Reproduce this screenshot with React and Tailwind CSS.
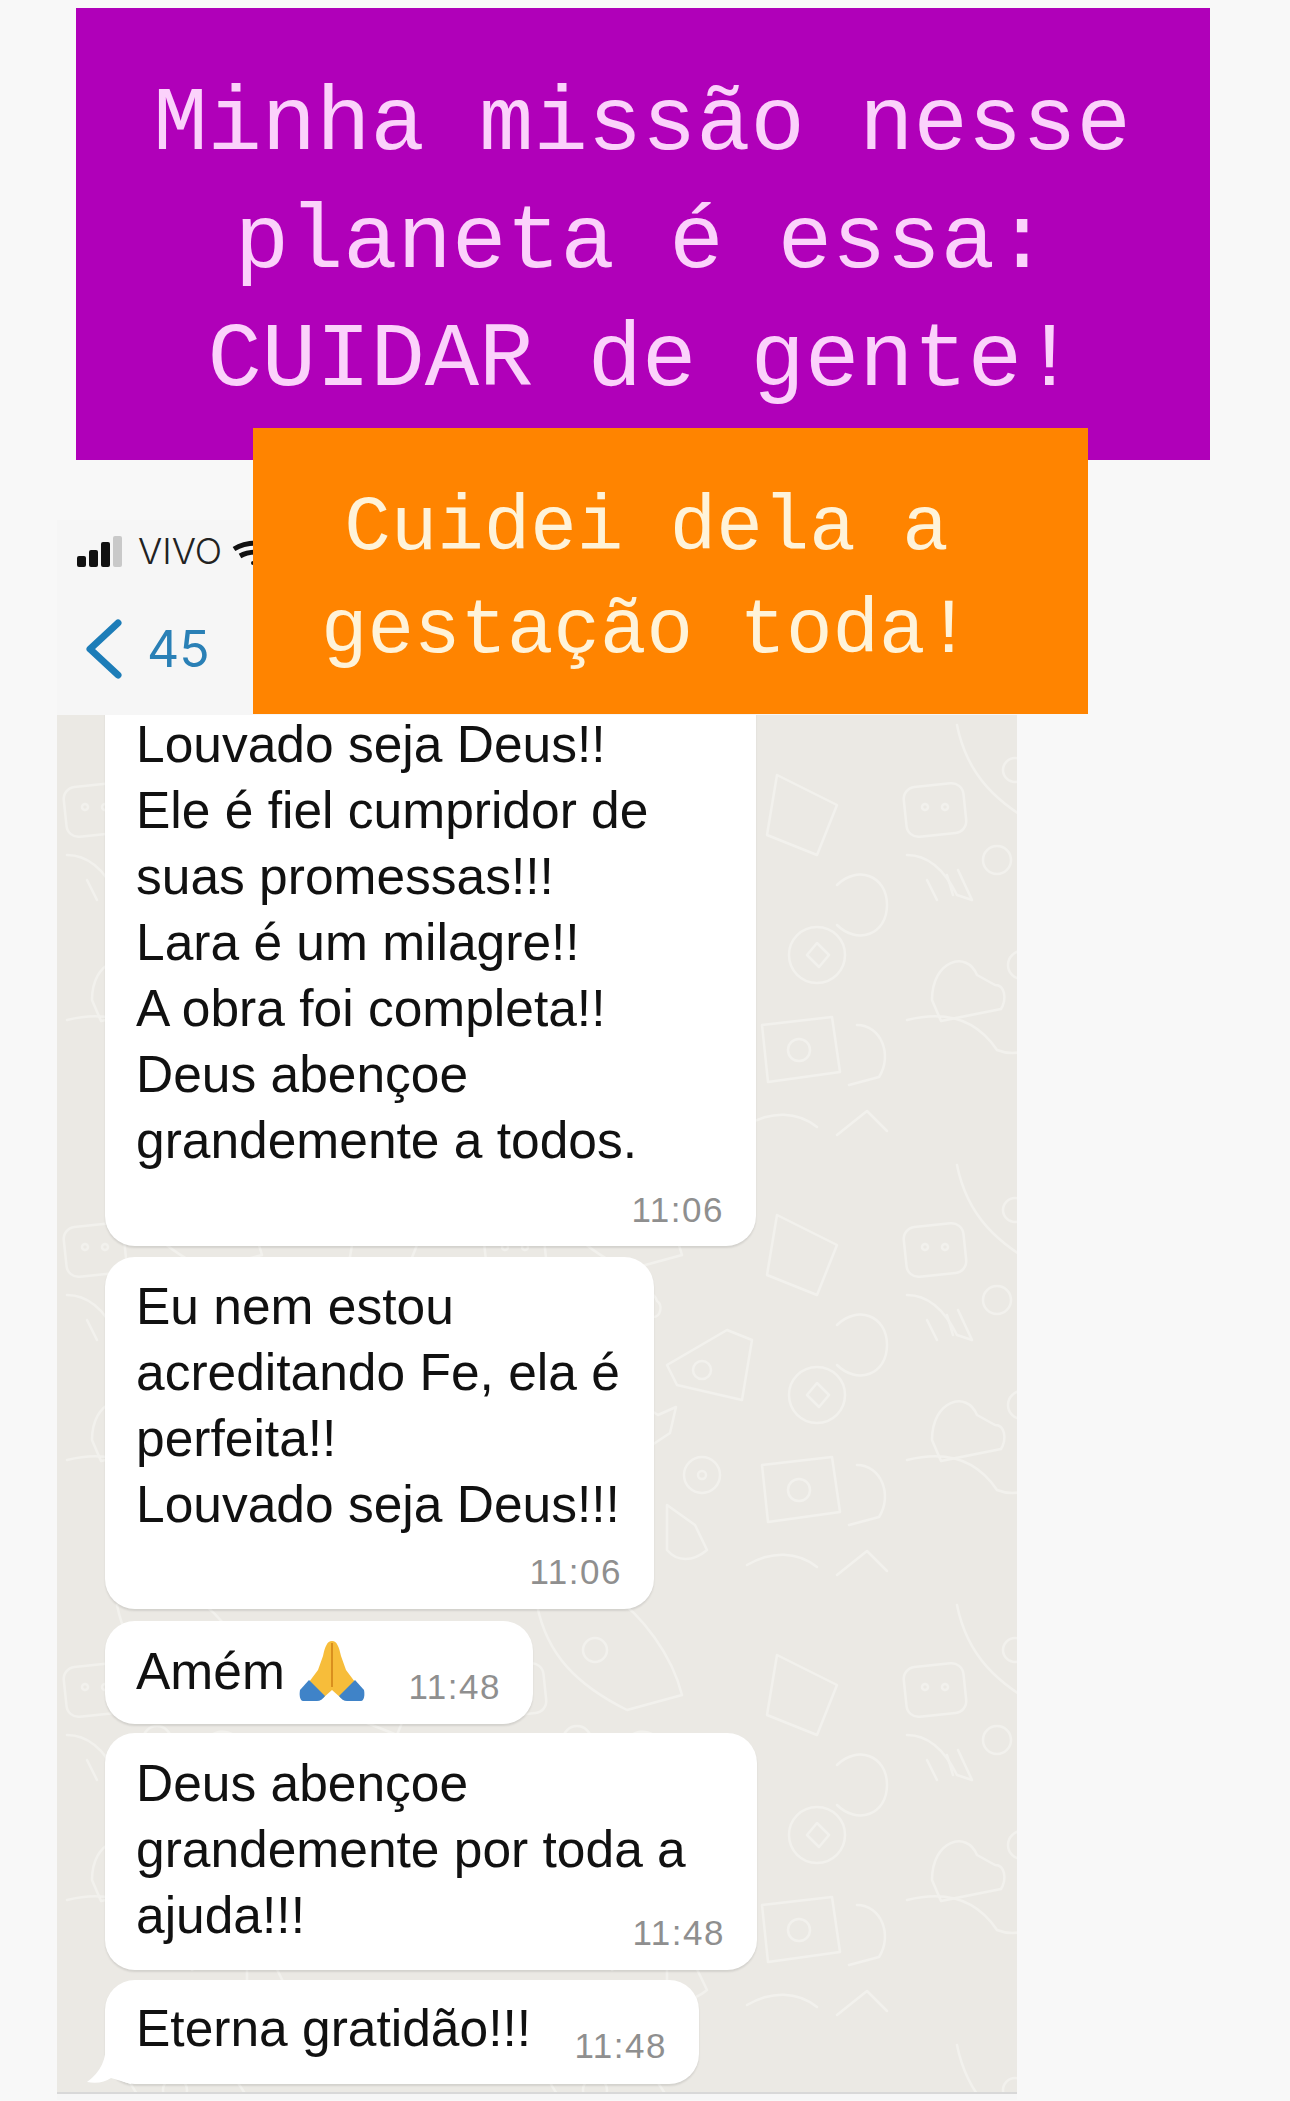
import React from 'react';

const sans = 'font-["Liberation_Sans",Arial,sans-serif]';

const Time = ({ children, className = '' }) => (
  <span className={`text-[35px] leading-[40px] tracking-[1.5px] text-[#8f8f8f] ${className}`}>{children}</span>
);

const Line = ({ children }) => <div className="whitespace-nowrap">{children}</div>;

const Bubble = ({ className, children }) => (
  <div className={`relative bg-white rounded-[30px] shadow-[0_2px_2px_rgba(0,0,0,0.1)] pl-[31px] pr-[32px] text-[51.5px] leading-[66px] text-[#111] ${className}`}>
    {children}
  </div>
);

const PrayEmoji = () => (
  <svg width="66" height="62" viewBox="0 0 66 62" className="ml-[14px] mb-[2px]">
    <path d="M33 1c-5 0-7 6-9 15l-5 14-9 12 14 16 9-8 9 8 14-16-9-12-5-14C40 7 38 1 33 1z" fill="#f7bd3a" />
    <path d="M33 3v44" stroke="#d98f1e" strokeWidth="2" />
    <path d="M10 40L1 50c-1 5 0 11 3 11h14c3 0 6-2 8-5z" fill="#3f83c8" />
    <path d="M56 40l9 10c1 5 0 11-3 11H48c-3 0-6-2-8-5z" fill="#3f83c8" />
  </svg>
);

const Doodles = () => (
  <svg className="absolute inset-0 w-full h-full blur-[0.7px]" fill="none" stroke="#f2f1ed" strokeWidth="2.5" strokeLinecap="round" strokeLinejoin="round">
    <defs>
      <pattern id="wall" x="0" y="0" width="420" height="440" patternUnits="userSpaceOnUse">
        <path d="M60 10c10 50 40 80 90 105l55-15c-10-40-40-80-70-100" />
        <circle cx="118" cy="55" r="12" />
        <rect x="8" y="70" width="60" height="50" rx="12" transform="rotate(-6 38 95)" />
        <circle cx="28" cy="92" r="3" />
        <circle cx="48" cy="92" r="3" />
        <circle cx="100" cy="145" r="14" />
        <path d="M150 150c0-16 26-18 30-4 6 4 4 16-4 16h-24c-6-2-6-10-2-12z" />
        <path d="M10 140c24 0 40 20 50 40l15 5-14-30" />
        <path d="M30 165l10 20M50 160l6 20" />
        <path d="M150 190l16-22 6 12-20 30" />
        <path d="M190 210l60-35 25 10-10 60-65-15z" />
        <circle cx="225" cy="215" r="9" />
        <circle cx="125" cy="250" r="14" />
        <path d="M165 250l16 10 18-8-6 26-18 12z" />
        <path d="M35 285c0-40 35-50 45-25l18 10c10 0 12 14 6 24l-60 12z" />
        <path d="M10 305c40-10 70 0 90 30 20 8 40 0 60-20l15 30-40 30" />
        <circle cx="225" cy="320" r="18" />
        <circle cx="225" cy="320" r="4" />
        <path d="M190 395l0-45 28 20 12 25c-14 12-30 12-40 0z" />
        <path d="M300 60l60 30-20 50-50-20z" />
        <path d="M360 170c20-20 50-10 50 20s-30 40-50 20" />
        <circle cx="340" cy="240" r="28" />
        <path d="M330 240l10-12 12 12-10 12z" />
        <path d="M285 310l70-8 8 55-72 10z" />
        <circle cx="322" cy="335" r="11" />
        <path d="M380 310c24 0 36 30 22 52l-30 8" />
        <path d="M270 410c24-14 50-14 70 2M360 420l30-24 20 20" />
      </pattern>
    </defs>
    <rect width="100%" height="100%" fill="url(#wall)" stroke="none" />
  </svg>
);

const App = () => {
  return (
    <div className="relative w-[1290px] h-[2101px] overflow-hidden bg-[#f8f8f8] pt-[8px]">
      <div className='ml-[76px] w-[1134px] h-[452px] bg-[#b000b9] pt-[58px] text-center font-["Liberation_Mono","Courier_New",monospace] text-[90.5px] leading-[118px] text-[#fbd2fb]'>
        <div className="pr-[2px]">Minha missão nesse</div>
        <div className="pr-[2px]">planeta é essa:</div>
        <div className="pr-[2px]">CUIDAR de gente!</div>
      </div>

      {/* print do whatsapp */}
      <div className={`ml-[57px] mt-[60px] w-[960px] ${sans}`}>
        <div className="h-[195px] bg-[#f6f6f6] px-[20px] pt-[16px]">
          <div className="flex items-end h-[31px]">
            <div className="flex items-end gap-[3px]">
              <span className="w-[9px] h-[11px] rounded-[2px] bg-[#111]" />
              <span className="w-[9px] h-[17px] rounded-[2px] bg-[#111]" />
              <span className="w-[9px] h-[25px] rounded-[2px] bg-[#111]" />
              <span className="w-[9px] h-[31px] rounded-[2px] bg-[#c9c9c9]" />
            </div>
            <span className='ml-[16px] font-["Inter",sans-serif] font-light text-[36px] leading-[31px] text-[#222]'>VIVO</span>
            <svg width="30" height="30" viewBox="0 0 30 30" className="ml-[10px] -mb-[3px]" fill="none" stroke="#111" strokeWidth="5">
              <path d="M2 9c8-5 16-6 24-6" />
              <path d="M8 16c5-3 10-4 18-4" />
              <circle cx="21" cy="23" r="2" fill="#111" stroke="none" />
            </svg>
          </div>
          <div className="flex items-center mt-[50px] ml-[7px]">
            <svg width="40" height="64" viewBox="0 0 40 64" fill="none" stroke="#1d7db8" strokeWidth="7" strokeLinecap="round" strokeLinejoin="round">
              <path d="M34 6L6 32l28 26" />
            </svg>
            <span className='ml-[23px] font-["Inter",sans-serif] font-normal text-[50px] leading-none text-[#2a80b6]'>45</span>
          </div>
        </div>

        <div className="relative h-[1379px] bg-[#ebe9e4] border-b-2 border-[#d8d8d8] overflow-hidden">
          <Doodles />
          <div className="relative flex flex-col items-start pl-[48px]">
            <Bubble className="-mt-[4px] w-[651px] rounded-t-none pb-[16px]">
              <Line>Louvado seja Deus!!</Line>
              <Line>Ele é fiel cumpridor de</Line>
              <Line>suas promessas!!!</Line>
              <Line>Lara é um milagre!!</Line>
              <Line>A obra foi completa!!</Line>
              <Line>Deus abençoe</Line>
              <Line>grandemente a todos.</Line>
              <div className="flex justify-end mt-[17px]"><Time>11:06</Time></div>
            </Bubble>

            <Bubble className="mt-[11px] w-[549px] pt-[16px] pb-[17px]">
              <Line>Eu nem estou</Line>
              <Line>acreditando Fe, ela é</Line>
              <Line>perfeita!!</Line>
              <Line>Louvado seja Deus!!!</Line>
              <div className="flex justify-end mt-[15px]"><Time>11:06</Time></div>
            </Bubble>

            <Bubble className="mt-[12px] w-[428px] pt-[17px] pb-[20px]">
              <div className="flex items-end justify-between h-[66px]">
                <div className="flex items-end">
                  <span>Amém</span>
                  <PrayEmoji />
                </div>
                <Time className="translate-y-[3px]">11:48</Time>
              </div>
            </Bubble>

            <Bubble className="mt-[9px] w-[652px] pt-[17px] pb-[22px]">
              <Line>Deus abençoe</Line>
              <Line>grandemente por toda a</Line>
              <div className="flex items-end justify-between">
                <span>ajuda!!!</span>
                <Time className="translate-y-[5px]">11:48</Time>
              </div>
            </Bubble>

            <Bubble className="mt-[10px] w-[594px] pt-[15px] pb-[23px]">
              <div className="flex items-end justify-between h-[66px]">
                <span>Eterna gratidão!!!</span>
                <Time className="translate-y-[5px]">11:48</Time>
              </div>
              <svg width="44" height="40" viewBox="0 0 44 40" className="absolute -left-[18px] bottom-0" fill="#fff">
                <path d="M18 0c2 14-4 28-18 38 10 2 18 0 24-4l20 6V0z" />
              </svg>
            </Bubble>
          </div>
        </div>
        <div className="h-[6px] bg-[#f6f6f6]" />
      </div>

      {/* caixa laranja por cima do print */}
      <div className='absolute left-[253px] top-[428px] w-[835px] h-[286px] bg-[#ff8400] pt-[49px] pr-[48px] text-center font-["Liberation_Mono","Courier_New",monospace] text-[77.5px] leading-[103px] text-[#fff3d9]'>
        <div>Cuidei dela a</div>
        <div>gestação toda!</div>
      </div>
    </div>
  );
};

export default App;
